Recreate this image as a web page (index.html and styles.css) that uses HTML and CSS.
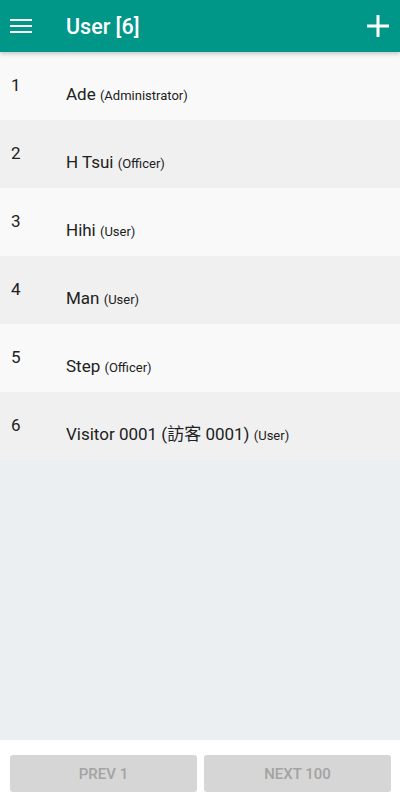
FILE: index.html
```html
<!DOCTYPE html>
<html lang="en">
  <head>
    <meta charset="UTF-8" />
    <meta name="viewport" content="width=device-width, initial-scale=1.0" />
    <title>User</title>
    <link rel="stylesheet" href="styles.css">
  </head>
  <body>
    <header class="app-bar">
      <button class="icon-btn menu-btn" aria-label="Menu">
        <svg width="22" height="14" viewBox="0 0 22 14">
          <rect x="0" y="0" width="22" height="2" fill="#fff" />
          <rect x="0" y="6" width="22" height="2" fill="#fff" />
          <rect x="0" y="12" width="22" height="2" fill="#fff" />
        </svg>
      </button>
      <h1 class="title">User [6]</h1>
      <button class="icon-btn add-btn" aria-label="Add">
        <svg width="22" height="22" viewBox="0 0 22 22">
          <rect x="9.5" y="0" width="3" height="22" fill="#fff" />
          <rect x="0" y="9.5" width="22" height="3" fill="#fff" />
        </svg>
      </button>
    </header>

    <main class="user-list">
      <div class="user-row">
        <span class="user-no">1</span>
        <span class="user-name">Ade <small>(Administrator)</small></span>
      </div>
      <div class="user-row">
        <span class="user-no">2</span>
        <span class="user-name">H Tsui <small>(Officer)</small></span>
      </div>
      <div class="user-row">
        <span class="user-no">3</span>
        <span class="user-name">Hihi <small>(User)</small></span>
      </div>
      <div class="user-row">
        <span class="user-no">4</span>
        <span class="user-name">Man <small>(User)</small></span>
      </div>
      <div class="user-row">
        <span class="user-no">5</span>
        <span class="user-name">Step <small>(Officer)</small></span>
      </div>
      <div class="user-row">
        <span class="user-no">6</span>
        <span class="user-name">Visitor 0001 (訪客 0001) <small>(User)</small></span>
      </div>
    </main>

    <footer class="pager">
      <button class="page-btn" disabled>PREV 1</button>
      <button class="page-btn" disabled>NEXT 100</button>
    </footer>
  </body>
</html>
```

FILE: styles.css
```css
body {
  font-family: Roboto, "Noto Sans CJK TC", sans-serif;
  margin: 0;
  padding: 0;
  height: 800px;
  display: flex;
  flex-direction: column;
  color: #212121;
  background-color: #fff;
}

.app-bar {
  height: 52px;
  flex: none;
  display: flex;
  align-items: center;
  background-color: #009688;
  box-shadow: 0 2px 4px rgba(0, 0, 0, 0.2);
  position: relative;
  z-index: 1;
}

.icon-btn {
  border: none;
  background: none;
  padding: 0;
  display: flex;
  align-items: center;
  justify-content: center;
}

.menu-btn {
  margin-left: 10px;
  width: 22px;
  height: 52px;
}

.title {
  margin: 0 0 0 34px;
  flex: 1;
  color: #fff;
  font-size: 21.5px;
  font-weight: 500;
}

.add-btn {
  margin-right: 11px;
  width: 22px;
  height: 52px;
}

.user-list {
  flex: 1;
  background-color: #eceff1;
}

.user-row {
  height: 68px;
  display: flex;
  align-items: flex-start;
  background-color: #f9f9f9;
}

.user-row:nth-child(even) {
  background-color: #f0f0f0;
}

.user-no {
  width: 55px;
  padding-left: 11px;
  padding-top: 23px;
  font-size: 17px;
  line-height: 20px;
}

.user-name {
  padding-top: 32px;
  font-size: 17px;
  line-height: 20px;
}

.user-name small {
  font-size: 13px;
}

.pager {
  height: 60px;
  flex: none;
  display: flex;
  gap: 7px;
  padding: 15px 9px 8px 10px;
  box-sizing: border-box;
  background-color: #fff;
}

.page-btn {
  flex: 1;
  border: none;
  border-radius: 3px;
  background-color: #d6d6d6;
  color: #a3a3a3;
  font-family: Roboto, sans-serif;
  font-size: 15px;
  font-weight: 500;
}
```
